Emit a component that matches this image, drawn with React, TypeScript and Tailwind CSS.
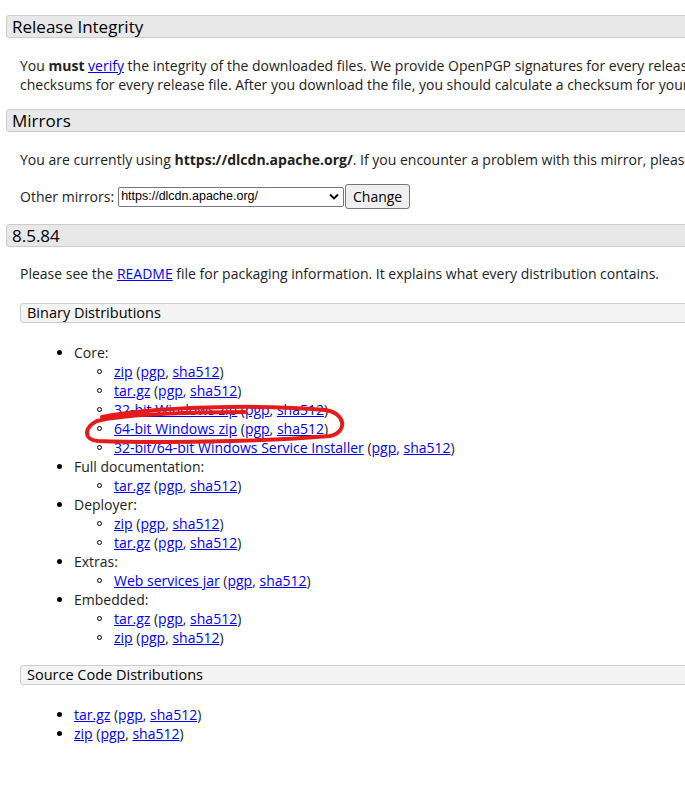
import * as React from 'react';

const A = ({ children }: { children: React.ReactNode }) => (
  <a href="#" className="text-[#0000ee] underline">{children}</a>
);

const Sigs = () => (
  <> (<A>pgp</A>, <A>sha512</A>)</>
);

function SectionHead({ children, className = '' }: { children: React.ReactNode; className?: string }) {
  return (
    <div className={`h-[23px] border border-[#cccccc] rounded-l-[3px] bg-[#e8e8e8] pl-[5px] text-[17px] leading-[21px] text-black ${className}`}>
      {children}
    </div>
  );
}

function SubHead({ children, className = '' }: { children: React.ReactNode; className?: string }) {
  return (
    <div className={`ml-[14px] h-[20px] border border-[#cccccc] rounded-l-[3px] bg-[#f4f4f4] pl-[6px] text-[14.5px] leading-[18px] text-black ${className}`}>
      {children}
    </div>
  );
}

function Item({ children }: { children: React.ReactNode }) {
  return (
    <div className="flex items-center h-[19px]">
      <span className="ml-[57px] mr-[12px] w-[5px] h-[5px] rounded-full bg-black" />
      <span className="whitespace-nowrap">{children}</span>
    </div>
  );
}

function SubItem({ children }: { children: React.ReactNode }) {
  return (
    <div className="flex items-center h-[19px]">
      <span className="ml-[97px] mr-[12px] w-[5px] h-[5px] rounded-full border border-black" />
      <span className="whitespace-nowrap">{children}</span>
    </div>
  );
}

export default function App() {
  return (
    <div className="relative w-[685px] h-[792px] overflow-hidden bg-white text-[#222] text-[14px] leading-[19px]" style={{ fontFamily: '"Open Sans", "Noto Sans", sans-serif' }}>
      <div className="w-[1100px] pl-[6px] pt-[15px]">
        <SectionHead>Release Integrity</SectionHead>
        <div className="pl-[14px] mt-[18px] whitespace-nowrap">
          <div>You <b>must</b> <A>verify</A> the integrity of the downloaded files. We provide OpenPGP signatures for every release file. This signature should be matched against the KEYS file which contains the OpenPGP keys of Tomcat's Release Managers. We also provide SHA-512</div>
          <div>checksums for every release file. After you download the file, you should calculate a checksum for your download, and make sure it is the same as ours.</div>
        </div>

        <SectionHead className="mt-[15px]">Mirrors</SectionHead>
        <div className="pl-[14px] mt-[18px] whitespace-nowrap">
          You are currently using <b>https://dlcdn.apache.org/</b>. If you encounter a problem with this mirror, please select another mirror. If all mirrors are failing, there are backup mirrors (at the end of the mirrors list) that should be available.
        </div>
        <div className="pl-[14px] mt-[15px] flex items-center h-[25px] whitespace-nowrap">
          <span className="mr-[4px]">Other mirrors:</span>
          <div className="w-[226px] h-[20px] border border-[#767676] rounded-[2px] bg-white flex items-center justify-between pl-[2px] pr-[4px] text-[12.5px] text-black" style={{ fontFamily: '"Liberation Sans", Arial, sans-serif' }}>
            <span>https://dlcdn.apache.org/</span>
            <svg width="10" height="7" viewBox="0 0 10 7"><path d="M1 1.5 L5 5.5 L9 1.5" fill="none" stroke="#000" strokeWidth="1.8" /></svg>
          </div>
          <button className="ml-[1px] w-[65px] h-[25px] border border-[#767676] rounded-[3px] bg-[#efefef] text-black text-[14px]">Change</button>
        </div>

        <SectionHead className="mt-[15px]">8.5.84</SectionHead>
        <div className="pl-[14px] mt-[17px] whitespace-nowrap">
          Please see the <A>README</A> file for packaging information. It explains what every distribution contains.
        </div>

        <SubHead className="mt-[20px]">Binary Distributions</SubHead>
        <div className="mt-[20px] -ml-[6px]">
          <Item>Core:</Item>
          <SubItem><A>zip</A><Sigs /></SubItem>
          <SubItem><A>tar.gz</A><Sigs /></SubItem>
          <SubItem><A>32-bit Windows zip</A><Sigs /></SubItem>
          <SubItem><A>64-bit Windows zip</A><Sigs /></SubItem>
          <SubItem><A>32-bit/64-bit Windows Service Installer</A><Sigs /></SubItem>
          <Item>Full documentation:</Item>
          <SubItem><A>tar.gz</A><Sigs /></SubItem>
          <Item>Deployer:</Item>
          <SubItem><A>zip</A><Sigs /></SubItem>
          <SubItem><A>tar.gz</A><Sigs /></SubItem>
          <Item>Extras:</Item>
          <SubItem><A>Web services jar</A><Sigs /></SubItem>
          <Item>Embedded:</Item>
          <SubItem><A>tar.gz</A><Sigs /></SubItem>
          <SubItem><A>zip</A><Sigs /></SubItem>
        </div>

        <SubHead className="mt-[18px]">Source Code Distributions</SubHead>
        <div className="mt-[20px] -ml-[6px]">
          <Item><A>tar.gz</A><Sigs /></Item>
          <Item><A>zip</A><Sigs /></Item>
        </div>
      </div>

      <svg className="absolute left-0 top-0 pointer-events-none" width="685" height="792">
        <path
          d="M102 417 C150 407 260 404 325 410 C346 413 348 432 330 436 C260 442 150 443 98 441 C84 440 83 428 97 421 C125 414 200 412 245 412"
          fill="none"
          stroke="#e41b1b"
          strokeWidth="4"
          strokeLinecap="round"
        />
      </svg>
    </div>
  );
}
